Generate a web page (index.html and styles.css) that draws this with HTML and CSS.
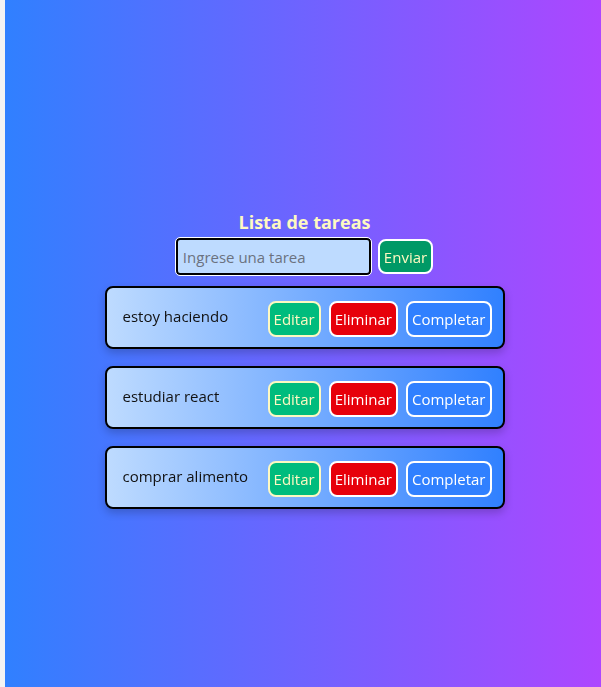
FILE: index.html
```html
<!DOCTYPE html>
<html lang="es">
<head>
<meta charset="utf-8">
<title>Lista de tareas</title>
<link rel="stylesheet" href="styles.css">
</head>
<body>
<div class="page">
  <main class="app">
    <h1 class="title">Lista de tareas</h1>
    <form class="form">
      <input class="input" type="text" placeholder="Ingrese una tarea" autofocus>
      <button class="btn btn-send" type="button">Enviar</button>
    </form>
    <ul class="list">
      <li class="card">
        <span class="card-text">estoy haciendo</span>
        <div class="actions">
          <button class="btn btn-edit" type="button">Editar</button>
          <button class="btn btn-del" type="button">Eliminar</button>
          <button class="btn btn-done" type="button">Completar</button>
        </div>
      </li>
      <li class="card">
        <span class="card-text">estudiar react</span>
        <div class="actions">
          <button class="btn btn-edit" type="button">Editar</button>
          <button class="btn btn-del" type="button">Eliminar</button>
          <button class="btn btn-done" type="button">Completar</button>
        </div>
      </li>
      <li class="card">
        <span class="card-text">comprar alimento</span>
        <div class="actions">
          <button class="btn btn-edit" type="button">Editar</button>
          <button class="btn btn-del" type="button">Eliminar</button>
          <button class="btn btn-done" type="button">Completar</button>
        </div>
      </li>
    </ul>
  </main>
</div>
</body>
</html>
```
FILE: styles.css
```css
* { box-sizing: border-box; }
html, body { margin: 0; padding: 0; }
body {
  background: #f3f3f3;
  font-family: "Open Sans", "Noto Sans", sans-serif;
  font-size: 15px;
}
.page {
  margin-left: 5px;
  height: 687px;
  background: linear-gradient(to right, #3080ff, #ad46ff);
  padding-top: 208px;
  padding-left: 3px;
}
.app {
  display: flex;
  flex-direction: column;
  align-items: center;
}
.title {
  margin: 0;
  font-size: 18px;
  line-height: 28px;
  font-weight: 700;
  color: #fef9c2;
}
.form {
  display: flex;
  align-items: center;
  gap: 7px;
  margin-top: 2px;
}
.input {
  width: 195px;
  height: 37px;
  background: #bedbff;
  border: 2px solid #000;
  outline: 1px solid #fff;
  border-radius: 4px;
  padding: 0 5px;
  font: inherit;
  font-size: 15px;
  color: #000;
}
.input::placeholder { color: #6b7280; }
.btn {
  font: inherit;
  font-size: 15px;
  line-height: 24px;
  height: 36px;
  padding: 4px 4px;
  border: 2px solid #fff;
  border-radius: 8px;
  color: #fff;
  cursor: pointer;
}
.btn-send { background: #009966; height: 35px; color: #fef9c2; }
.list {
  list-style: none;
  margin: 11px 0 0;
  padding: 0;
  display: flex;
  flex-direction: column;
  gap: 17px;
}
.card {
  width: 400px;
  height: 63px;
  display: flex;
  align-items: center;
  justify-content: space-between;
  padding: 0 11px 0 16px;
  border: 2px solid #000;
  border-radius: 8px;
  background: linear-gradient(to right, #bedbff, #3080ff);
  box-shadow: 0 4px 8px rgba(0,0,0,0.2);
}
.card-text { color: #111; margin-top: -4px; }
.actions { display: flex; gap: 8px; margin-top: 2px; }
.btn-edit { background: #00bc7d; border-color: #fef9c2; color: #fef9c2; }
.btn-del { background: #e7000b; }
.btn-done { background: #3080ff; }
```
